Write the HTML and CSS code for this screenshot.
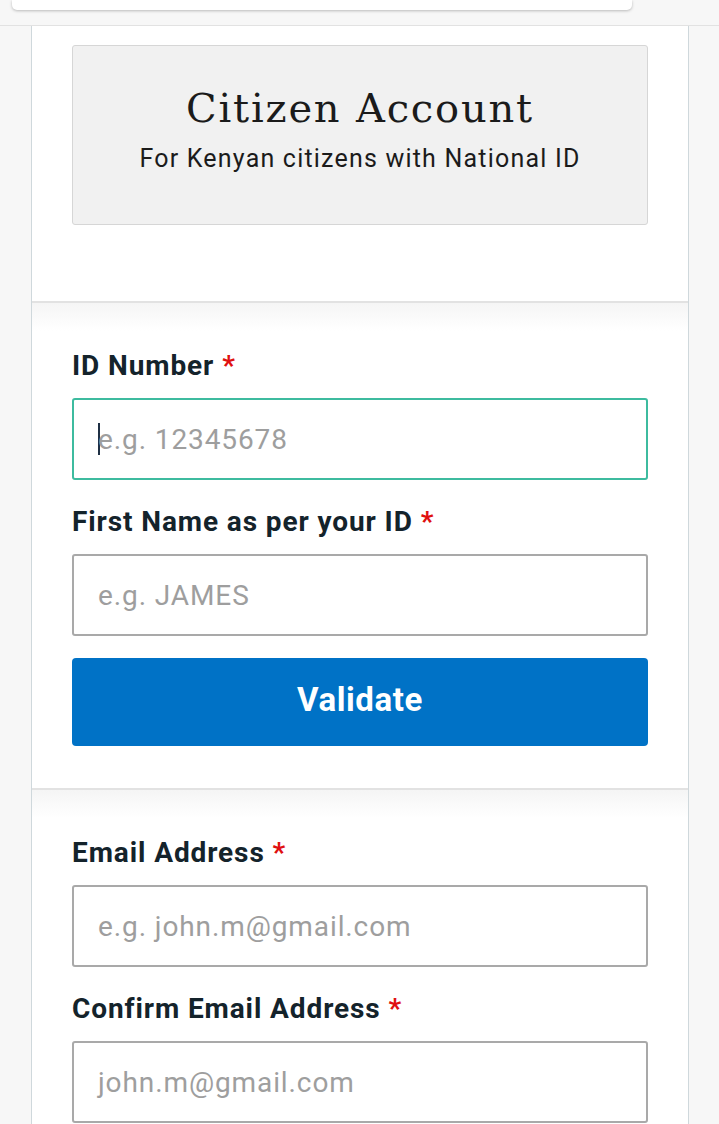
FILE: index.html
```html
<!DOCTYPE html>
<html lang="en">
<head>
<meta charset="utf-8">
<title>Citizen Account</title>
<link rel="stylesheet" href="styles.css">
</head>
<body>
<div class="topbar">
  <div class="topcard"></div>
</div>
<main class="panel">
  <section class="section intro">
    <div class="account-card">
      <h1 class="account-title">Citizen Account</h1>
      <p class="account-sub">For Kenyan citizens with National ID</p>
    </div>
  </section>
  <section class="section form-section">
    <label class="field-label">ID Number <span class="req">*</span></label>
    <div class="input focused"><span class="caret"></span><span class="ph">e.g. 12345678</span></div>
    <label class="field-label">First Name as per your ID <span class="req">*</span></label>
    <div class="input"><span class="ph">e.g. JAMES</span></div>
    <button class="btn">Validate</button>
  </section>
  <section class="section form-section last">
    <label class="field-label">Email Address <span class="req">*</span></label>
    <div class="input"><span class="ph">e.g. john.m@gmail.com</span></div>
    <label class="field-label">Confirm Email Address <span class="req">*</span></label>
    <div class="input"><span class="ph">john.m@gmail.com</span></div>
  </section>
</main>
</body>
</html>
```
FILE: styles.css
```css
* { box-sizing: border-box; }
html, body { margin: 0; padding: 0; }
body {
  background: #f7f7f7;
  font-family: Roboto, "Noto Sans", "Liberation Sans", sans-serif;
  height: 1124px;
  overflow: hidden;
}
.topbar {
  height: 26px;
  border-bottom: 1px solid #e2e2e2;
  background: #f7f7f7;
}
.topcard {
  margin-left: 12px;
  width: 620px;
  height: 10px;
  background: #fff;
  border-radius: 0 0 5px 5px;
  box-shadow: 0 1px 3px rgba(0,0,0,0.25);
}
.panel {
  margin-left: 31px;
  width: 658px;
  background: #fff;
  border-left: 1px solid #cfd8dc;
  border-right: 1px solid #cfd8dc;
  min-height: 1100px;
}
.section {
  padding: 0 40px;
}
.intro {
  padding-top: 19px;
  padding-bottom: 76px;
}
.account-card {
  height: 180px;
  background: #f1f1f1;
  border: 1px solid #d6d6d6;
  border-radius: 3px;
  text-align: center;
  padding-top: 38px;
}
.account-title {
  margin: 0;
  font-family: "DejaVu Serif", serif;
  font-weight: normal;
  font-size: 40px;
  line-height: 48px;
  letter-spacing: 1.8px;
  color: #1b1b1b;
}
.account-sub {
  margin: 12px 0 0;
  font-size: 25px;
  line-height: 30px;
  letter-spacing: 1.2px;
  color: #1b1b1b;
}
.form-section {
  border-top: 2px solid #e2e2e2;
  background: linear-gradient(#f5f5f5, #ffffff 28px);
  padding-top: 48px;
  padding-bottom: 42px;
}
.field-label {
  display: block;
  font-size: 28px;
  line-height: 30px;
  font-weight: bold;
  letter-spacing: 0.9px;
  color: #14232b;
  margin-bottom: 17px;
}
.req { color: #e01010; }
.input {
  height: 82px;
  border: 2px solid #a9a9a9;
  border-radius: 3px;
  display: flex;
  align-items: center;
  padding-left: 24px;
  margin-bottom: 27px;
  font-size: 28px;
  letter-spacing: 0.9px;
  color: #9e9e9e;
}
.input.focused { border-color: #3dbb9f; }
.caret {
  width: 2px;
  height: 32px;
  background: #1f3044;
  margin-right: -2px;
}
.btn {
  display: block;
  width: 100%;
  height: 88px;
  margin-top: -5px;
  background: #0072c6;
  color: #fff;
  border: none;
  border-radius: 4px;
  font-family: Roboto, sans-serif;
  font-weight: bold;
  font-size: 33px;
  letter-spacing: 0.6px;
  padding-bottom: 6px;
}
.last { padding-bottom: 0; }
```
